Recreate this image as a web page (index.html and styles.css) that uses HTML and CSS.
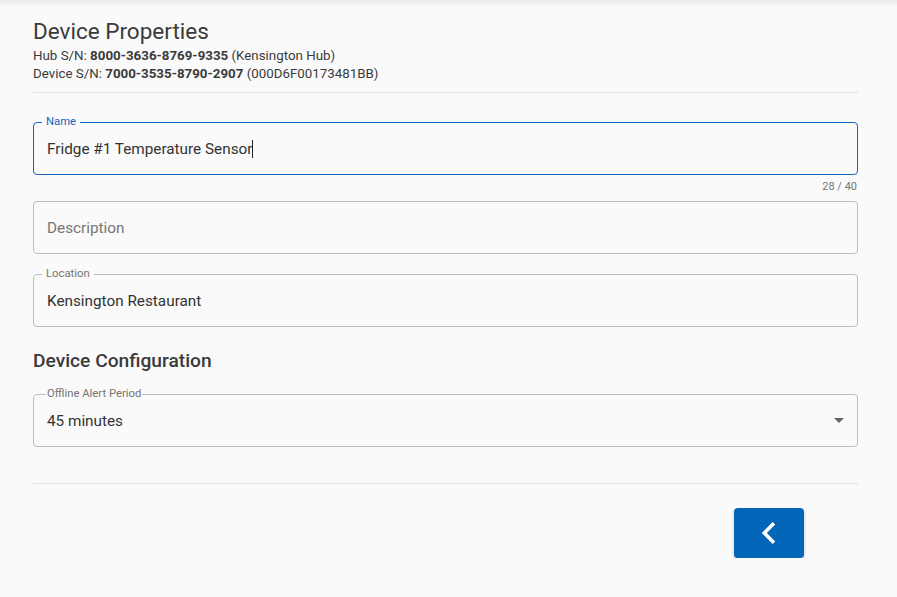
FILE: index.html
```html
<!DOCTYPE html>
<html lang="en">
<head>
<meta charset="utf-8"/>
<meta content="width=device-width, initial-scale=1.0" name="viewport"/>
<title>Device Properties</title>
<link rel="stylesheet" href="styles.css">
</head>
<body>
<div class="topshade"></div>
<div class="container">
  <div class="head">
    <h1>Device Properties</h1>
    <div class="meta">Hub S/N: <b>8000-3636-8769-9335</b> (Kensington Hub)</div>
    <div class="meta">Device S/N: <b>7000-3535-8790-2907</b> (000D6F00173481BB)</div>
  </div>

  <div class="field focused">
    <span class="label">Name</span>
    <div class="value">Fridge #1 Temperature Sensor<span class="caret"></span></div>
  </div>
  <div class="counter">28 / 40</div>

  <div class="field">
    <div class="value placeholder">Description</div>
  </div>

  <div class="field">
    <span class="label">Location</span>
    <div class="value">Kensington Restaurant</div>
  </div>

  <h2>Device Configuration</h2>

  <div class="field select">
    <span class="label tight">Offline Alert Period</span>
    <div class="value">45 minutes</div>
    <span class="arrow"></span>
  </div>

  <div class="actions">
    <button class="btn" type="button">
      <svg width="44" height="44" viewBox="0 0 24 24"><path fill="#fff" d="M15.41 7.41L14 6l-6 6 6 6 1.41-1.41L10.83 12z"/></svg>
    </button>
  </div>
</div>
</body>
</html>
```

FILE: styles.css
```css
body {
  font-family: Roboto, "Noto Sans", sans-serif;
  margin: 0;
  background: #fafafa;
  color: #333;
}
.topshade {
  height: 8px;
  margin-bottom: -8px;
  background: linear-gradient(to bottom, rgba(0,0,0,0.06), rgba(0,0,0,0));
}
.container {
  width: 825px;
  margin: 0 0 0 33px;
  padding-top: 17px;
}
.head {
  border-bottom: 1px solid #e0e0e0;
  padding-bottom: 9px;
  margin-bottom: 29px;
}
h1 {
  font-size: 22.5px;
  font-weight: 400;
  margin: 0 0 2px;
  color: #3a3a3a;
  line-height: 28px;
}
.meta {
  font-size: 13.33px;
  line-height: 18px;
  color: #3a3a3a;
}
.meta b {
  font-weight: 700;
}
.field {
  position: relative;
  height: 51px;
  border: 1px solid #bdbdbd;
  border-radius: 4px;
  margin-bottom: 20px;
}
.field.focused {
  border-color: #1565c0;
  margin-bottom: 0;
}
.label {
  position: absolute;
  left: 8px;
  top: -7px;
  padding: 0 4px;
  background: #fafafa;
  font-size: 11.3px;
  line-height: 12px;
  color: #757575;
}
.label.tight {
  left: 12px;
  padding: 0 1px;
}
.focused .label {
  color: #1565c0;
}
.value {
  font-size: 15.3px;
  line-height: 20px;
  padding: 16px 13px 14px;
  color: #333;
  display: flex;
  align-items: center;
}
.value.placeholder {
  color: #757575;
}
.caret {
  display: inline-block;
  width: 1px;
  height: 18px;
  background: #222;
}
.counter {
  text-align: right;
  font-size: 11px;
  color: #757575;
  line-height: 14px;
  padding: 5px 1px 7px 0;
}
h2 {
  font-size: 19.2px;
  font-weight: 500;
  color: #3a3a3a;
  margin: 22px 0 21px;
  line-height: 24px;
}
.select .arrow {
  position: absolute;
  right: 13px;
  top: 23px;
  width: 0;
  height: 0;
  border-left: 5px solid transparent;
  border-right: 5px solid transparent;
  border-top: 5px solid #666;
}
.actions {
  border-top: 1px solid #e0e0e0;
  margin-top: 36px;
  padding-top: 24px;
  display: flex;
  justify-content: flex-end;
  padding-right: 54px;
}
.btn {
  width: 70px;
  height: 50px;
  background: #0366b8;
  border: none;
  border-radius: 4px;
  box-shadow: 0 2px 3px rgba(0,0,0,0.25);
  display: flex;
  align-items: center;
  justify-content: center;
  padding: 0;
  cursor: pointer;
}
```
